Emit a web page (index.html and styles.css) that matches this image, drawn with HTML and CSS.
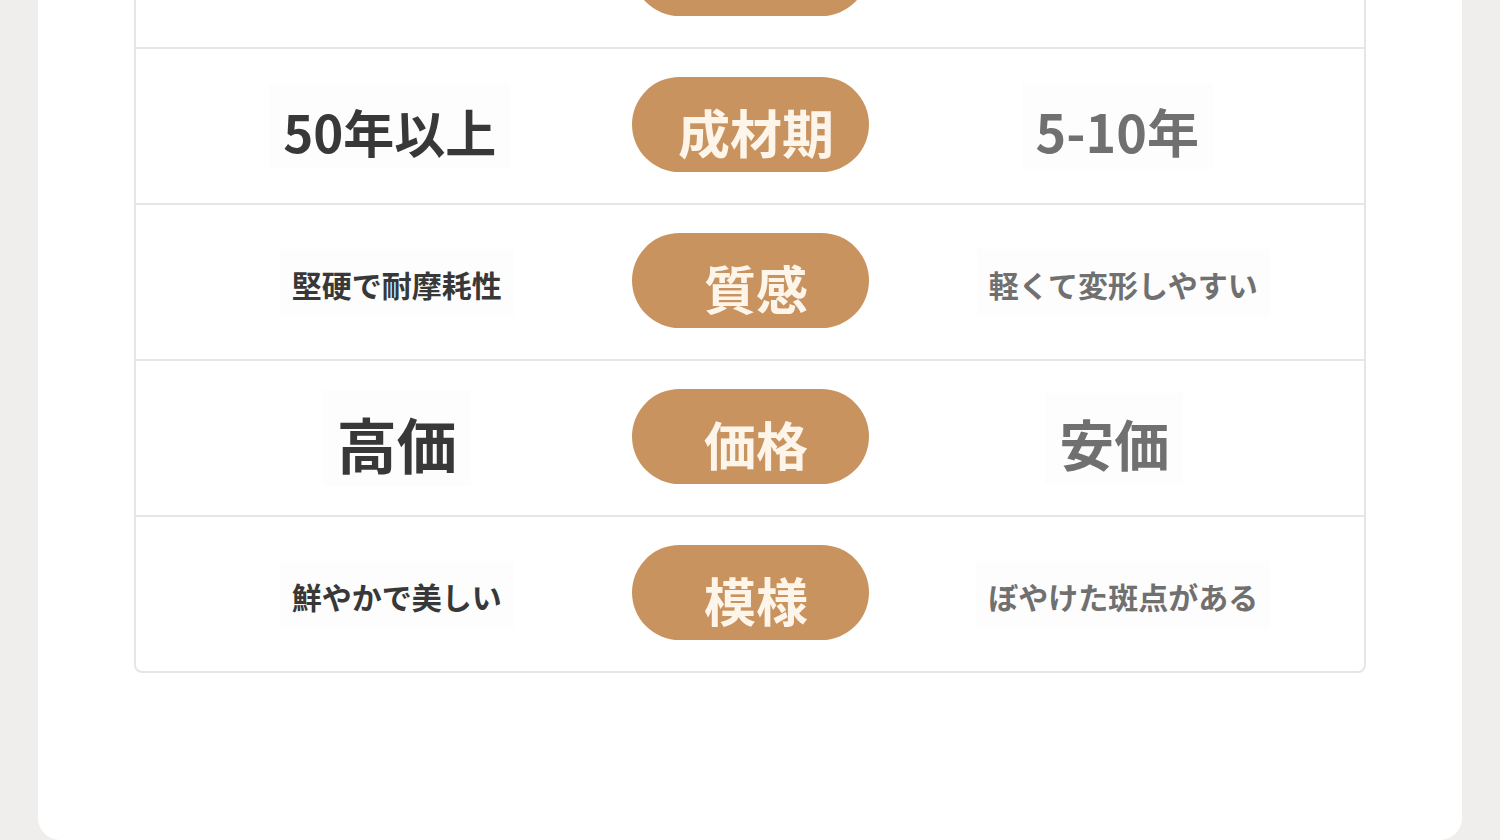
FILE: index.html
```html
<!DOCTYPE html>
<html lang="ja">
<head>
<meta charset="utf-8">
<title>比較表</title>
<link rel="stylesheet" href="styles.css">
</head>
<body>
<div class="card">
  <div class="table">
    <div class="row">
      <div class="cell left"></div>
      <div class="pill"></div>
      <div class="cell right"></div>
    </div>
    <div class="row">
      <div class="cell left"><span class="txt big">50年以上</span></div>
      <div class="pill">成材期</div>
      <div class="cell right"><span class="txt big sm2">5-10年</span></div>
    </div>
    <div class="row">
      <div class="cell left"><span class="txt small">堅硬で耐摩耗性</span></div>
      <div class="pill">質感</div>
      <div class="cell right"><span class="txt small">軽くて変形しやすい</span></div>
    </div>
    <div class="row">
      <div class="cell left"><span class="txt huge">高価</span></div>
      <div class="pill">価格</div>
      <div class="cell right"><span class="txt huge r">安価</span></div>
    </div>
    <div class="row">
      <div class="cell left"><span class="txt small">鮮やかで美しい</span></div>
      <div class="pill">模様</div>
      <div class="cell right"><span class="txt small">ぼやけた斑点がある</span></div>
    </div>
  </div>
</div>
</body>
</html>
```
FILE: styles.css
```css
html, body {
  margin: 0;
  padding: 0;
}
body {
  background: #efeeec;
  font-family: "Noto Sans CJK JP", "Noto Sans", sans-serif;
  height: 840px;
  overflow: hidden;
}
.card {
  margin: -109px 38px 0;
  background: #ffffff;
  border-radius: 0 0 22px 22px;
  padding: 0 96px 167px;
}
.table {
  border: 2px solid #e6e6e6;
  border-radius: 8px;
}
.row {
  display: grid;
  grid-template-columns: 1fr 237px 1fr;
  align-items: center;
  height: 154px;
  border-bottom: 2px solid #e6e6e6;
}
.row:last-child {
  border-bottom: none;
}
.cell {
  display: flex;
  justify-content: center;
  align-items: center;
}
.left {
  padding-left: 14px;
}
.right {
  padding-left: 2px;
}
.txt {
  font-weight: 700;
  background: #fdfdfd;
  padding: 8px 14px 4px;
  line-height: 1.3;
}
.left .txt {
  color: #383838;
}
.right .txt {
  color: #707070;
}
.big {
  font-size: 51px;
  padding-top: 14px;
}
.left .big {
  margin-left: -2px;
}
.sm2 {
  font-size: 52px;
}
.small {
  font-size: 30px;
  padding: 16px 12px 12px;
  margin-left: 12px;
}
.huge {
  font-size: 60px;
  padding-top: 14px;
  margin-left: 12px;
}
.huge.r {
  font-size: 55px;
  margin-left: -6px;
}
.pill {
  height: 95px;
  box-sizing: border-box;
  border-radius: 48px;
  background: #c9935f;
  color: #fdf5ea;
  font-size: 52px;
  font-weight: 700;
  display: flex;
  align-items: center;
  justify-content: center;
  padding: 14px 0 0 12px;
  line-height: 1;
  margin-top: -3px;
}
```
